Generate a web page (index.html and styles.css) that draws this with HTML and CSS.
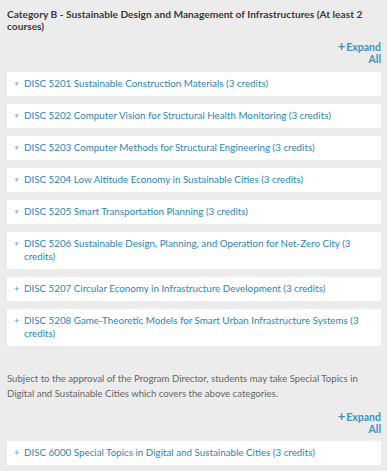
FILE: index.html
```html
<!DOCTYPE html>
<html lang="en">

<head>
    <meta charset="UTF-8">
    <meta name="viewport" content="width=device-width, initial-scale=1.0">
    <title>Programme Courses</title>
    <link rel="stylesheet" href="styles.css">
</head>

<body>
    <div class="category">
        <h3 class="category-title">Category B - Sustainable Design and Management of Infrastructures (At least 2 courses)</h3>

        <div class="expand-row">
            <a href="#" class="expand-all"><span class="expand-plus">+</span>Expand All</a>
        </div>

        <ul class="course-list">
            <li class="course"><span class="toggle">+</span><a href="#" class="course-name">DISC 5201 Sustainable Construction Materials (3 credits)</a></li>
            <li class="course"><span class="toggle">+</span><a href="#" class="course-name">DISC 5202 Computer Vision for Structural Health Monitoring (3 credits)</a></li>
            <li class="course"><span class="toggle">+</span><a href="#" class="course-name">DISC 5203 Computer Methods for Structural Engineering (3 credits)</a></li>
            <li class="course"><span class="toggle">+</span><a href="#" class="course-name">DISC 5204 Low Altitude Economy in Sustainable Cities (3 credits)</a></li>
            <li class="course"><span class="toggle">+</span><a href="#" class="course-name">DISC 5205 Smart Transportation Planning (3 credits)</a></li>
            <li class="course"><span class="toggle">+</span><a href="#" class="course-name">DISC 5206 Sustainable Design, Planning, and Operation for Net-Zero City (3 credits)</a></li>
            <li class="course"><span class="toggle">+</span><a href="#" class="course-name">DISC 5207 Circular Economy in Infrastructure Development (3 credits)</a></li>
            <li class="course"><span class="toggle">+</span><a href="#" class="course-name">DISC 5208 Game-Theoretic Models for Smart Urban Infrastructure Systems (3 credits)</a></li>
        </ul>
    </div>

    <div class="category">
        <p class="note">Subject to the approval of the Program Director, students may take Special Topics in Digital and Sustainable Cities which covers the above categories.</p>

        <div class="expand-row">
            <a href="#" class="expand-all"><span class="expand-plus">+</span>Expand All</a>
        </div>

        <ul class="course-list">
            <li class="course"><span class="toggle">+</span><a href="#" class="course-name">DISC 6000 Special Topics in Digital and Sustainable Cities (3 credits)</a></li>
        </ul>
    </div>
</body>
</html>
```

FILE: styles.css
```css
body {
    background: #ececec;
    color: #333;
    font-family: 'Lato', 'Noto Sans', sans-serif;
    margin: 0;
    padding: 9px 6px 0 7px;
}

.category-title {
    font-size: 10.2px;
    line-height: 11.5px;
    font-weight: bold;
    color: #3a3a3a;
    margin: 0;
}

.expand-row {
    display: flex;
    justify-content: flex-end;
    margin-top: 9px;
}

.expand-all {
    display: inline-block;
    width: 44px;
    text-align: right;
    font-size: 10.5px;
    line-height: 11.5px;
    font-weight: bold;
    color: #3d93c4;
    text-decoration: none;
}

.expand-plus {
    font-size: 13px;
    margin-right: 1px;
}

.course-list {
    list-style: none;
    margin: 7px 0 0;
    padding: 0;
    display: flex;
    flex-direction: column;
    gap: 8px;
}

.course {
    background: #fff;
    display: flex;
    align-items: flex-start;
    padding: 5px 8px 6px 7px;
}

.toggle {
    width: 10px;
    flex-shrink: 0;
    font-size: 9px;
    line-height: 13px;
    color: #5a9cc4;
}

.course-name {
    font-size: 9.8px;
    line-height: 13px;
    color: #2a86b8;
    text-decoration: none;
}

.note {
    font-size: 9.6px;
    line-height: 15px;
    color: #666;
    margin: 25px 0 0;
}

.note + .expand-row {
    margin-top: 10px;
}

.note ~ .course-list {
    margin-top: 6px;
}
```
